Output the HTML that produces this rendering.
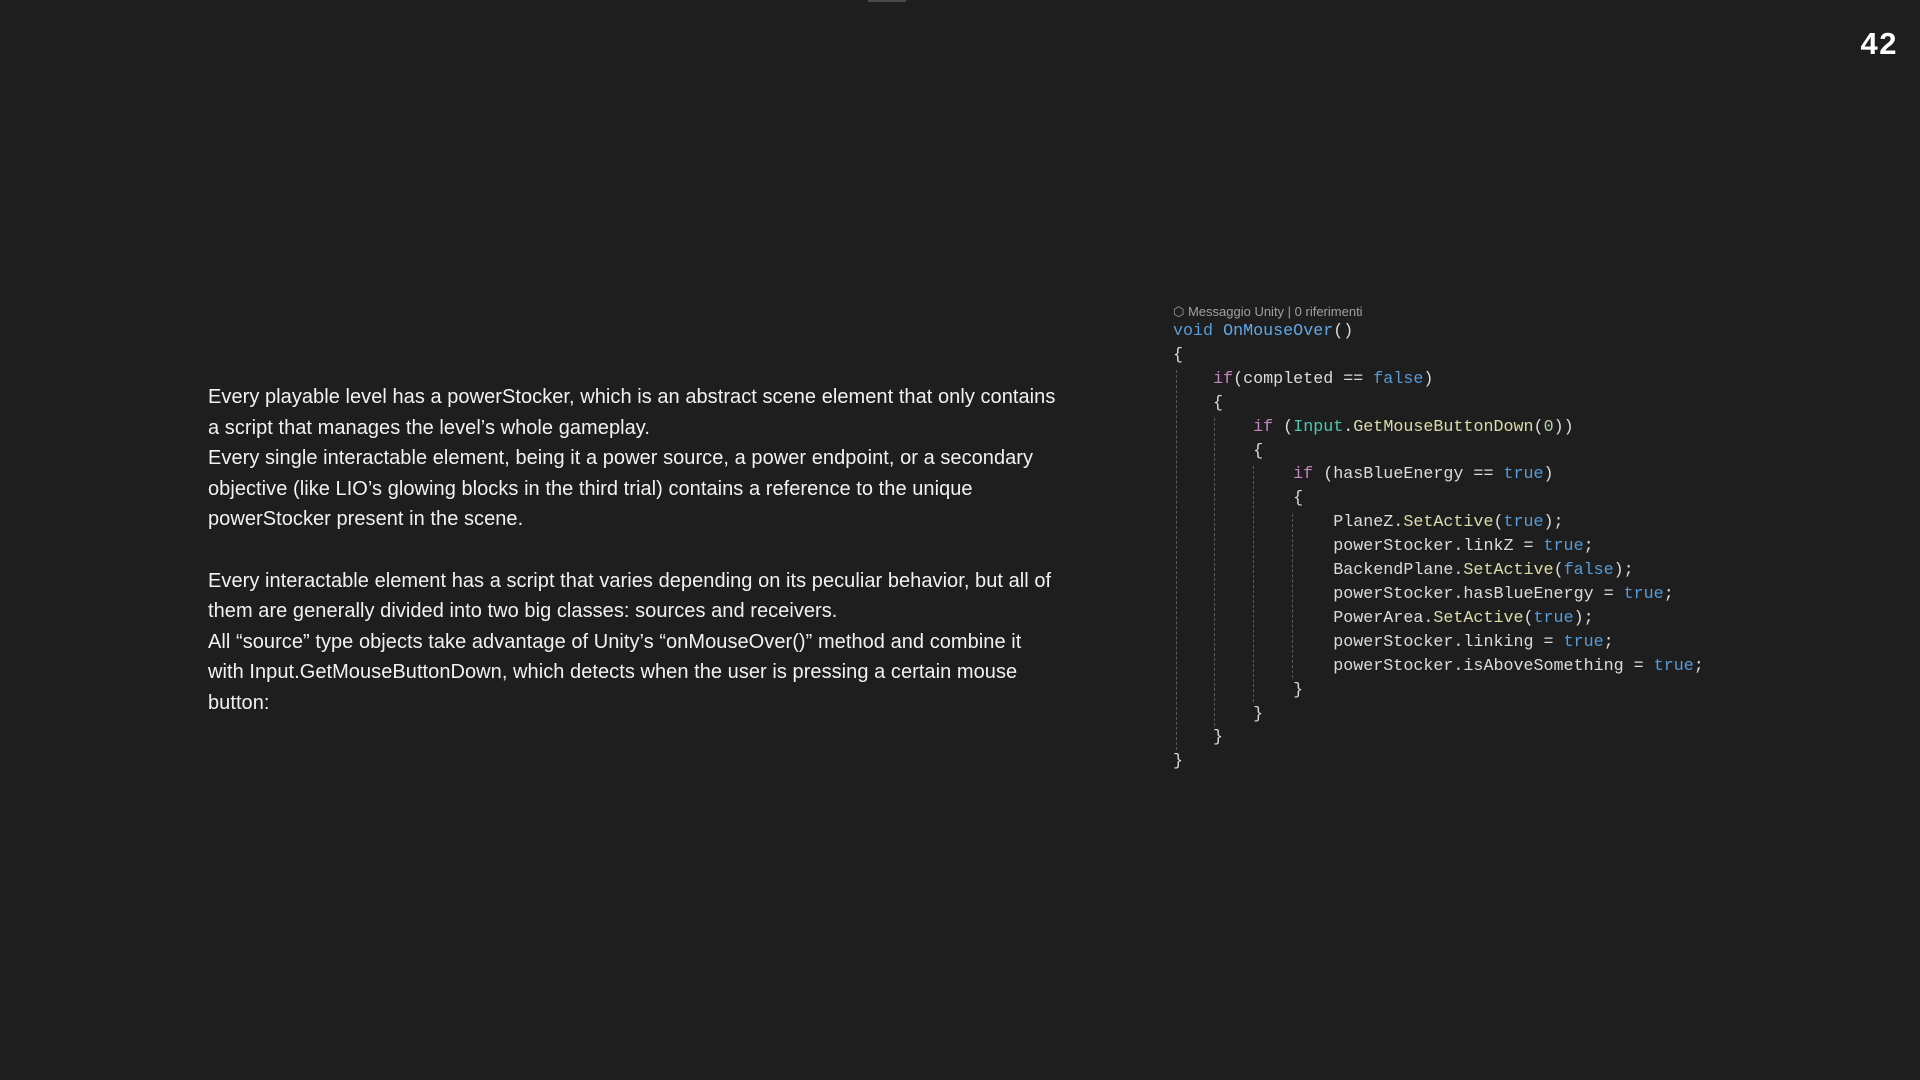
<!DOCTYPE html>
<html><head><meta charset="utf-8"><style>
html,body{margin:0;padding:0;background:#1e1e1e;width:1920px;height:1080px;overflow:hidden;position:relative}
.topbar{position:absolute;left:868px;top:0;width:38px;height:2px;background:#4a4a4a}
.num{position:absolute;right:22px;top:26px;font:bold 31px "Liberation Sans",sans-serif;color:#fff;letter-spacing:1.5px}
.txt{position:absolute;left:208px;top:382px;font:20px "Liberation Sans",sans-serif;color:#f2f2f2;letter-spacing:0.05px;line-height:30.6px;white-space:nowrap}
.code{position:absolute;left:1173px;top:320px;font:16.7px "Liberation Mono",monospace;color:#dcdcdc;line-height:23.9px;white-space:pre}
.hdr{position:absolute;left:1173px;top:304px;font:13px "Liberation Sans",sans-serif;color:#a0a0a0;white-space:nowrap}
.g{position:absolute;width:0;border-left:1px dashed #5a5a5a}
.k{color:#569cd6}.c{color:#c586c0}.m{color:#dcdcaa}.t{color:#4ec9b0}.n{color:#b5cea8}.f{color:#5fa8e8}
</style></head><body>
<div class="topbar"></div>
<div class="num">42</div>
<div class="txt">Every playable level has a powerStocker, which is an abstract scene element that only contains<br>a script that manages the level’s whole gameplay.<br>Every single interactable element, being it a power source, a power endpoint, or a secondary<br>objective (like LIO’s glowing blocks in the third trial) contains a reference to the unique<br>powerStocker present in the scene.<br><br>Every interactable element has a script that varies depending on its peculiar behavior, but all of<br>them are generally divided into two big classes: sources and receivers.<br>All “source” type objects take advantage of Unity’s “onMouseOver()” method and combine it<br>with Input.GetMouseButtonDown, which detects when the user is pressing a certain mouse<br>button:</div>
<div class="hdr">⬡ Messaggio Unity | 0 riferimenti</div>
<div class="g" style="left:1176px;top:370px;height:380px"></div>
<div class="g" style="left:1214px;top:418px;height:308px"></div>
<div class="g" style="left:1253px;top:466px;height:236px"></div>
<div class="g" style="left:1292px;top:514px;height:164px"></div>
<div class="code"><span class="k">void</span> <span class="f">OnMouseOver</span>()
{
    <span class="c">if</span>(completed == <span class="k">false</span>)
    {
        <span class="c">if</span> (<span class="t">Input</span>.<span class="m">GetMouseButtonDown</span>(<span class="n">0</span>))
        {
            <span class="c">if</span> (hasBlueEnergy == <span class="k">true</span>)
            {
                PlaneZ.<span class="m">SetActive</span>(<span class="k">true</span>);
                powerStocker.linkZ = <span class="k">true</span>;
                BackendPlane.<span class="m">SetActive</span>(<span class="k">false</span>);
                powerStocker.hasBlueEnergy = <span class="k">true</span>;
                PowerArea.<span class="m">SetActive</span>(<span class="k">true</span>);
                powerStocker.linking = <span class="k">true</span>;
                powerStocker.isAboveSomething = <span class="k">true</span>;
            }
        }
    }
}</div>
</body></html>
